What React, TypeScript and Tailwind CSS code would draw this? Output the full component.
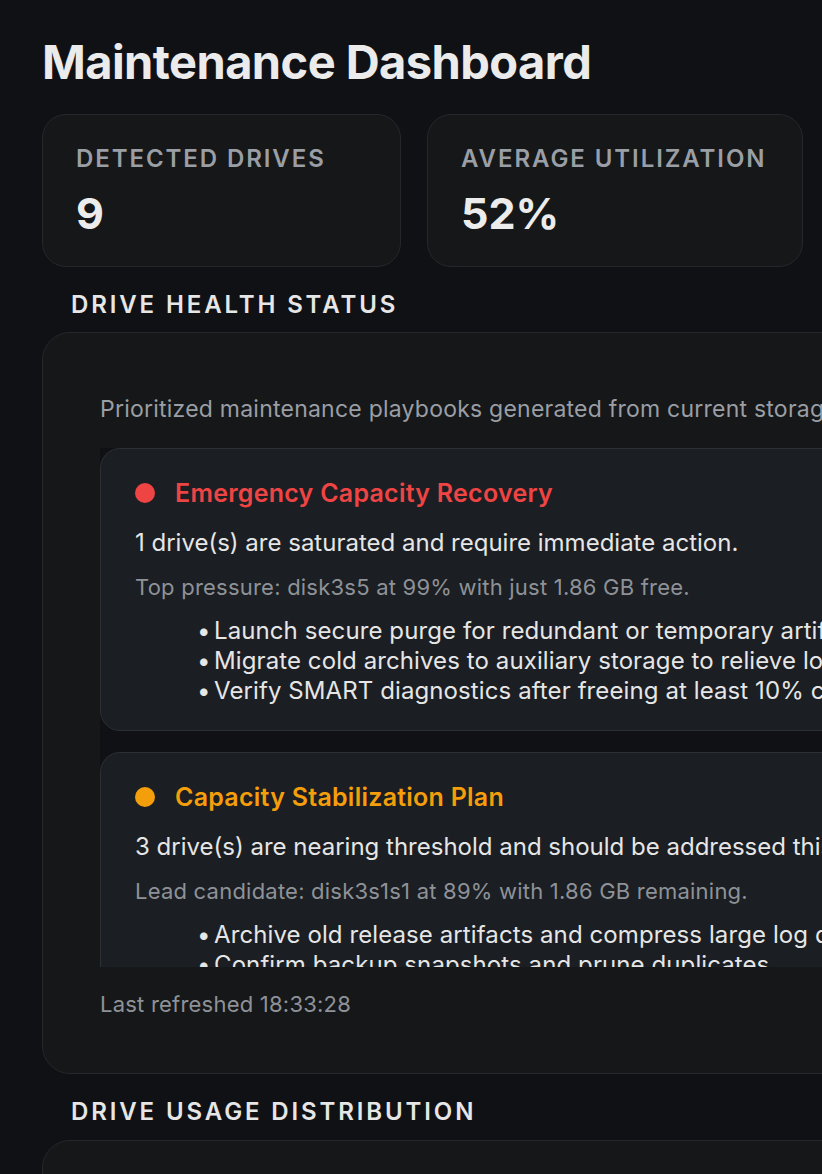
const playbooks = [
  {
    tone: "critical",
    title: "Emergency Capacity Recovery",
    summary: "1 drive(s) are saturated and require immediate action.",
    detail: "Top pressure: disk3s5 at 99% with just 1.86 GB free.",
    steps: [
      "Launch secure purge for redundant or temporary artifacts.",
      "Migrate cold archives to auxiliary storage to relieve load.",
      "Verify SMART diagnostics after freeing at least 10% capacity.",
    ],
  },
  {
    tone: "warning",
    title: "Capacity Stabilization Plan",
    summary: "3 drive(s) are nearing threshold and should be addressed this week.",
    detail: "Lead candidate: disk3s1s1 at 89% with 1.86 GB remaining.",
    steps: [
      "Archive old release artifacts and compress large log directories.",
      "Confirm backup snapshots and prune duplicates.",
      "Schedule a follow-up scan once cleanup completes.",
    ],
  },
];

function StatCard({ label, value, width }: { label: string; value: string; width: string }) {
  return (
    <div className={`${width} h-[153px] shrink-0 rounded-[24px] border border-[#25272b] bg-[#161719] pl-[33px] pt-[29px]`}>
      <div className="text-[24px] font-semibold uppercase leading-[30px] tracking-[0.08em] text-[#9a9ea5]">
        {label}
      </div>
      <div className="mt-[18px] text-[43px] font-bold leading-none text-[#ececec]">{value}</div>
    </div>
  );
}

function SectionHeading({ children }: { children: string }) {
  return (
    <h2 className="ml-[29px] text-[24px] font-semibold uppercase leading-[30px] tracking-[0.12em] text-[#e6e6e6]">
      {children}
    </h2>
  );
}

function PlaybookCard({ p }: { p: (typeof playbooks)[number] }) {
  const critical = p.tone === "critical";
  return (
    <div className="shrink-0 rounded-[20px] border border-[#2c2f34] bg-[#1b1e22] pb-[24px] pl-[34px] pt-[29px]">
      <div className="flex items-center gap-[20px]">
        <span
          className={`h-[20px] w-[20px] shrink-0 rounded-full ${critical ? "bg-[#ef4444]" : "bg-[#f59e0b]"}`}
        />
        <h3
          className={`text-[25px] font-semibold leading-[30px] tracking-[0.01em] ${critical ? "text-[#ef4444]" : "text-[#f59e0b]"}`}
        >
          {p.title}
        </h3>
      </div>
      <p className="mt-[20px] whitespace-nowrap text-[24px] leading-[30px] text-[#e6e6e6]">{p.summary}</p>
      <p className="mt-[16px] whitespace-nowrap text-[22px] leading-[26px] tracking-[0.01em] text-[#8e9298]">
        {p.detail}
      </p>
      <ul className="mt-[16px] pl-[62px] text-[24px] leading-[30px] tracking-[0.004em] text-[#e6e6e6]">
        {p.steps.map((s) => (
          <li key={s} className="flex whitespace-nowrap">
            <span className="w-[17px] shrink-0">•</span>
            {s}
          </li>
        ))}
      </ul>
    </div>
  );
}

export default function App() {
  return (
    <div className="h-screen w-full overflow-hidden bg-[#0f1115] font-['Inter',sans-serif]">
      <div className="w-[1400px] pl-[42px] pt-[38px]">
        <h1 className="text-[47px] font-bold leading-none tracking-[-0.012em] text-[#ebebeb]">
          Maintenance Dashboard
        </h1>

        <div className="mt-[29px] flex gap-[26px]">
          <StatCard label="Detected Drives" value="9" width="w-[359px]" />
          <StatCard label="Average Utilization" value="52%" width="w-[376px]" />
        </div>

        <div className="mt-[23px]">
          <SectionHeading>Drive Health Status</SectionHeading>
        </div>

        <section className="mt-[12px] w-[1300px] rounded-[28px] border border-[#25272b] bg-[#161718] pb-[56px] pl-[57px] pt-[63px]">
          <p className="whitespace-nowrap text-[23px] leading-[26px] tracking-[0.01em] text-[#9a9ea5]">
            Prioritized maintenance playbooks generated from current storage telemetry.
          </p>
          <div className="mt-[26px] flex h-[519px] flex-col gap-[21px] overflow-hidden bg-[#0f1115]">
            {playbooks.map((p) => (
              <PlaybookCard key={p.title} p={p} />
            ))}
          </div>
          <p className="mt-[24px] text-[22px] leading-[26px] tracking-[0.01em] text-[#8e9298]">
            Last refreshed 18:33:28
          </p>
        </section>

        <div className="mt-[23px]">
          <SectionHeading>Drive Usage Distribution</SectionHeading>
        </div>

        <section className="mt-[13px] h-[400px] w-[1300px] rounded-[28px] border border-[#25272b] bg-[#161718]" />
      </div>
    </div>
  );
}
